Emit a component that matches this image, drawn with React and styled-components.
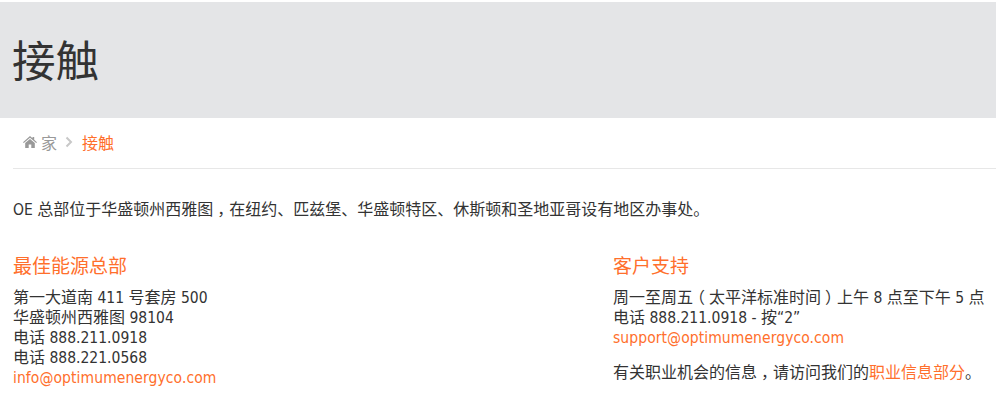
import React from "react";
import styled, { createGlobalStyle } from "styled-components";

const Global = createGlobalStyle`
  html, body { margin: 0; padding: 0; background: #fff; }
  body { font-family: "Noto Sans CJK SC", sans-serif; color: #333; font-size: 16px; }
`;
const Page = styled.div`width: 996px; height: 411px; overflow: hidden; padding-top: 2px; box-sizing: border-box;`;
const Banner = styled.header`height: 116px; background: #e4e5e7; padding-left: 13px; display: flex; align-items: center;`;
const Title = styled.h1`margin: -3px 0 0 -1px; font-size: 43.5px; line-height: 1; font-weight: 400; color: #333;`;
const Crumbs = styled.nav`margin-left: 13px; height: 48px; padding: 0 0 2px 10px; border-bottom: 1px solid #e7e7e7; display: flex; align-items: center;`;
const Home = styled.span`display: inline-flex; align-items: center; gap: 4px; color: #999;`;
const Chevron = styled.svg`width: 8px; height: 12px; margin: 0 9px 0 8px; fill: none; stroke: #c8c8c8; stroke-width: 2;`;
const Current = styled.span`color: #ff6f2c;`;
const Main = styled.main`padding: 0 0 0 13px;`;
const Intro = styled.p`margin: 29px 0 0; line-height: 20px;`;
const Columns = styled.div`display: grid; grid-template-columns: 600px 1fr; margin-top: 35px;`;
const Heading = styled.h3`margin: 0 0 9px; font-size: 19px; line-height: 24px; font-weight: 400; color: #ff6f2c;`;
const Lines = styled.p`margin: 0; line-height: 20px;`;
const Note = styled.p`margin: 15px 0 0; line-height: 20px;`;
const Latin = styled.span`font-family: "DejaVu Sans Condensed", "DejaVu Sans", sans-serif; font-size: 15.5px; line-height: 0;`;
const Mid = styled.span`font-feature-settings: "halt"; padding: 0 4px;`;
const Mail = styled.a`color: #ff6f2c; text-decoration: none;`;
const Address = styled(Latin)`letter-spacing: 0.08px;`;

export default function App() {
  return (
    <Page>
      <Global />
      <Banner><Title>接触</Title></Banner>
      <Crumbs>
        <Home>
          <svg width="14" height="12" viewBox="0 0 14 12" fill="#999">
            <path d="M7 0 L9.5 2.2 V1 H11.2 V3.700 L14 6.2 L13.2 7 L7 1.7 L.8 7 L0 6.2 Z" />
            <path d="M2.2 7 L7 3 L11.8 7 V12 H8.3 V8.5 H5.7 V12 H2.2 Z" />
          </svg>
          家
        </Home>
        <Chevron viewBox="0 0 8 12"><path d="M1.500 1.500 L6 6 L1.500 10.500" /></Chevron>
        <Current>接触</Current>
      </Crumbs>
      <Main>
        <Intro><Latin>OE </Latin>总部位于华盛顿州西雅图<Mid>，</Mid>在纽约、匹兹堡、华盛顿特区、休斯顿和圣地亚哥设有地区办事处。</Intro>
        <Columns>
          <section>
            <Heading>最佳能源总部</Heading>
            <Lines>
              第一大道南<Latin> 411 </Latin>号套房<Latin> 500</Latin><br />
              华盛顿州西雅图<Latin> 98104</Latin><br />
              电话<Latin> 888.211.0918</Latin><br />
              电话<Latin> 888.221.0568</Latin><br />
              <Mail href="#"><Address>info@optimumenergyco.com</Address></Mail>
            </Lines>
          </section>
          <section>
            <Heading>客户支持</Heading>
            <Lines>
              周一至周五<Mid>（</Mid>太平洋标准时间<Mid>）</Mid>上午<Latin> 8 </Latin>点至下午<Latin> 5 </Latin>点<br />
              电话<Latin> 888.211.0918 - </Latin>按<Latin>“2”</Latin><br />
              <Mail href="#"><Address>support@optimumenergyco.com</Address></Mail>
            </Lines>
            <Note>有关职业机会的信息<Mid>，</Mid>请访问我们的<Mail href="#">职业信息部分</Mail>。</Note>
          </section>
        </Columns>
      </Main>
    </Page>
  );
}
